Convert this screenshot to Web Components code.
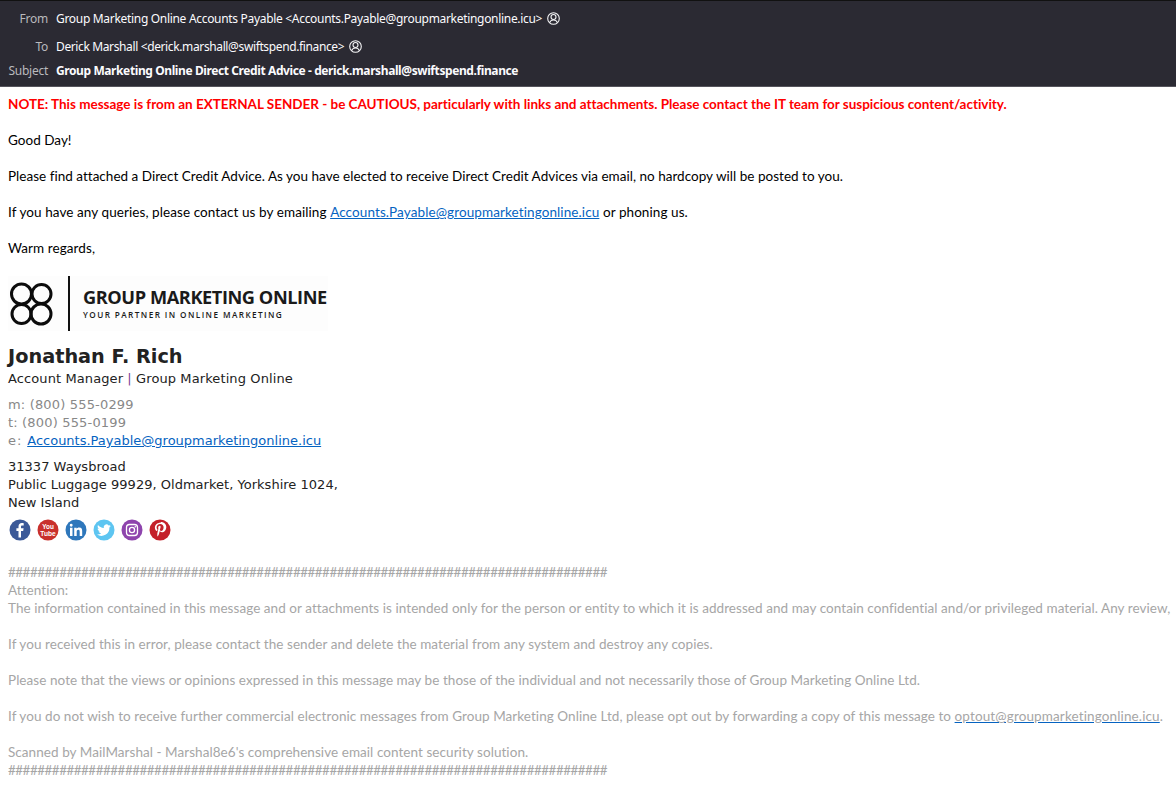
<!DOCTYPE html>
<html><head><meta charset="utf-8">
<style>html,body{margin:0;padding:0;background:#fff;overflow:hidden;width:1176px;height:796px}</style>
</head><body>
<mail-view>
<mail-header slot="header">
<header-row label="From" contact>Group Marketing Online Accounts Payable &lt;Accounts.Payable@groupmarketingonline.icu&gt;</header-row>
<header-row label="To" contact>Derick Marshall &lt;derick.marshall@swiftspend.finance&gt;</header-row>
<header-row label="Subject" strong>Group Marketing Online Direct Credit Advice - derick.marshall@swiftspend.finance</header-row>
</mail-header>
<mail-body>
<p class="note">NOTE: This message is from an EXTERNAL SENDER - be CAUTIOUS, particularly with links and attachments. Please contact the IT team for suspicious content/activity.</p>
<br>
<p class="tight">Good Day!</p><br>
<p class="tight">Please find attached a Direct Credit Advice. As you have elected to receive Direct Credit Advices via email, no hardcopy will be posted to you.</p><br>
<p class="wide">If you have any queries, please contact us by emailing <mail-link>Accounts.Payable@groupmarketingonline.icu</mail-link> or phoning us.</p><br>
<p class="wide">Warm regards,</p>
</mail-body>
<mail-signature></mail-signature>
<mail-footer></mail-footer>
</mail-view>
<script>
function def(name, html){
  customElements.define(name, class extends HTMLElement{
    constructor(){super();this.attachShadow({mode:'open'}).innerHTML=html;}
  });
}
const personIcon=`<svg width="13" height="13" viewBox="0 0 13 13" fill="none" stroke="#f4f4f6" stroke-width="1.1"><circle cx="6.5" cy="6.500" r="5.800"/><circle cx="6.500" cy="5" r="2.500"/><path d="M2.600 10.600C3.300 8.800 4.700 8 6.500 8s3.200.8 3.900 2.600"/></svg>`;
def('mail-view',`<style>:host{display:block;width:1176px;height:796px;overflow:hidden}</style><slot name="header"></slot><slot></slot>`);
def('mail-header',`<style>:host{display:block;box-sizing:border-box;height:87px;background:#2b2a33;border-top:1px solid #111;border-bottom:1px solid #55545c;padding-top:4px;font:12px "Noto Sans",sans-serif;color:#fbfbfe}</style><slot></slot>`);
customElements.define('header-row',class extends HTMLElement{
  constructor(){super();const r=this.attachShadow({mode:'open'});
    const l=this.getAttribute('label');
    r.innerHTML=`<style>
    :host{display:flex;align-items:center;height:${l==='From'?26:l==='To'?30:18}px}
    .l{width:48px;text-align:right;color:#b9b9bd;margin-right:8px;flex:none;letter-spacing:-.25px}
    .v{white-space:nowrap;letter-spacing:${l==='To'?-.375:-.31}px}
    :host([strong]) .v{font-weight:700;letter-spacing:-.4px}
    svg{margin-left:5px;flex:none}
    </style><span class="l">${l}</span><span class="v"><slot></slot></span>${this.hasAttribute('contact')?personIcon:''}`;
  }
});
def('mail-body',`<style>
:host{display:block;padding:8px 8px 0;font:13.500px/18px Lato,sans-serif;color:#000;letter-spacing:.06px}
::slotted(p){margin:0;white-space:nowrap}
::slotted(p.note){color:#f00;font-weight:700;letter-spacing:-.02px}
::slotted(p.tight){letter-spacing:.02px}
::slotted(p.wide){letter-spacing:.08px}
</style><slot></slot>`);
def('mail-link',`<style>a{color:#0563c1;letter-spacing:.1px}</style><a href="#"><slot></slot></a>`);
def('brand-logo',`<style>
:host{display:flex;align-items:center;width:320px;height:55px;background:#fdfdfd}
svg{flex:none}
.bar{width:2px;height:55px;background:#111;margin:0 13px 0 10px;flex:none}
.t{display:flex;flex-direction:column;gap:3px;color:#1a1a1a;white-space:nowrap}
b{font:700 18.200px/20px "Open Sans",sans-serif;letter-spacing:-.43px}
span{font:600 8.200px/10px "Open Sans",sans-serif;letter-spacing:1.420px}
</style>
<svg width="50" height="55" viewBox="0 0 50 55" fill="none" stroke="#0c0c0c" stroke-width="3">
<circle cx="13.500" cy="18" r="10"/><circle cx="33.500" cy="18" r="9.500"/><circle cx="13.500" cy="38" r="9.500"/><circle cx="33" cy="38" r="10"/></svg>
<i class="bar"></i><div class="t"><b>GROUP MARKETING ONLINE</b><span>YOUR PARTNER IN ONLINE MARKETING</span></div>`);
def('social-row',`<style>:host{display:flex;gap:6px}svg{width:22px;height:22px;display:block}</style>
<svg viewBox="0 0 22 22"><circle cx="11" cy="11" r="10.500" fill="#3b5998"/><path fill="#fff" d="M12 18.500v-6.600h2.200l.4-2.600H12V7.800c0-.8.3-1.300 1.300-1.300h1.400V4.200c-.3 0-1-.1-1.900-.1-2 0-3.300 1.200-3.300 3.400v1.800H7.400v2.600h2.100v6.600z"/></svg>
<svg viewBox="0 0 22 22"><circle cx="11" cy="11" r="10.500" fill="#c9302c"/><text x="11" y="10" text-anchor="middle" font-family="Liberation Sans" font-weight="700" font-size="6.400" fill="#fff">You</text><text x="11" y="17" text-anchor="middle" font-family="Liberation Sans" font-weight="700" font-size="6.600" fill="#fff">Tube</text></svg>
<svg viewBox="0 0 22 22"><circle cx="11" cy="11" r="10.500" fill="#2e77bb"/><path fill="#fff" d="M5 8.700h2.500V17H5zM6.200 4.800a1.400 1.400 0 1 1 0 2.900 1.400 1.400 0 0 1 0-2.900zM9.200 8.700h2.400v1.100c.4-.7 1.300-1.300 2.600-1.300 2.500 0 3 1.600 3 3.800V17h-2.500v-4.100c0-1 0-2.200-1.400-2.200s-1.600 1-1.600 2.100V17H9.200z"/></svg>
<svg viewBox="0 0 22 22"><circle cx="11" cy="11" r="10.500" fill="#5dc5f1"/><path fill="#fff" d="M17.800 6.800c-.5.2-1 .4-1.600.4.600-.3 1-.9 1.200-1.500-.5.300-1.100.6-1.800.7a2.800 2.800 0 0 0-4.800 2.600C8.400 8.900 6.400 7.700 5 6c-.7 1.300-.4 2.900.9 3.800-.5 0-.9-.1-1.300-.3 0 1.400 1 2.500 2.300 2.800-.4.100-.9.100-1.300 0 .4 1.100 1.400 1.900 2.600 2A5.700 5.700 0 0 1 4 15.500a8 8 0 0 0 12.400-7.100c.6-.4 1-.9 1.400-1.600z"/></svg>
<svg viewBox="0 0 22 22"><circle cx="11" cy="11" r="10.500" fill="#8e44ad"/><g fill="none" stroke="#fff" stroke-width="1.300"><rect x="5.500" y="5.500" width="11" height="11" rx="3"/><circle cx="11" cy="11" r="2.600"/></g><circle cx="14.300" cy="7.700" r=".8" fill="#fff"/></svg>
<svg viewBox="0 0 22 22"><circle cx="11" cy="11" r="10.500" fill="#c4202a"/><path fill="#fff" d="M11.500 3.800c-3.500 0-5.600 2.300-5.600 4.900 0 1.300.7 2.800 1.800 3.300.3.100.4 0 .5-.3l.2-.9c0-.2 0-.3-.1-.5-.4-.5-.7-1.100-.7-1.900 0-1.900 1.500-3.400 3.700-3.400 2 0 3.300 1.300 3.300 3.200 0 2.200-1.100 3.700-2.500 3.700-.8 0-1.400-.7-1.200-1.400.2-.9.7-1.900.7-2.600 0-.6-.3-1.100-1-1.100-.8 0-1.400.8-1.400 1.900 0 .7.200 1.100.2 1.100l-1 4.100c-.2.900-.1 2.300 0 3.100l.2.400.4-.3c.5-.8 1-1.900 1.200-2.800l.6-2.200c.3.600 1.100 1.100 2 1.100 2.600 0 4.500-2.400 4.500-5.300 0-2.800-2.300-5-5.400-5z"/></svg>`);
def('mail-signature',`<style>
:host{display:block;padding:19px 8px 0;font:13px/18px "DejaVu Sans",sans-serif;color:#222;white-space:nowrap}
.name{font-size:19.300px;font-weight:700;line-height:25px;margin-top:13px;color:#222}
.role{margin-top:1px;letter-spacing:.1px}
.role i{font-style:normal;color:#7b3f98}
.g{color:#888;margin-top:8px;letter-spacing:.17px}
.g span{letter-spacing:.9px}
a{color:#0563c1;letter-spacing:0}
.addr{margin-top:8px;color:#222;letter-spacing:.02px}
social-row{margin-top:7px;margin-left:1px}
</style>
<brand-logo></brand-logo>
<div class="name">Jonathan F. Rich</div>
<div class="role">Account Manager <i>|</i> Group Marketing Online</div>
<div class="g">m: (800) 555-0299<br>t: (800) 555-0199<br><span>e: </span><a href="#">Accounts.Payable@groupmarketingonline.icu</a></div>
<div class="addr">31337 Waysbroad<br>Public Luggage 99929, Oldmarket, Yorkshire 1024,<br>New Island</div>
<social-row></social-row>`);
def('mail-footer',`<style>
:host{display:block;padding:22px 8px 0;font:13.500px/18px Lato,sans-serif;color:#a6a6a6;white-space:nowrap;letter-spacing:.06px}
.h{letter-spacing:-.525px}
a{color:#a6a6a6;text-decoration-color:#0563c1;letter-spacing:.13px}
p{margin:0 0 18px}
</style>
<div class="h">${'#'.repeat(82)}</div>
<div>Attention:</div>
<p>The information contained in this message and or attachments is intended only for the person or entity to which it is addressed and may contain confidential and/or privileged material. Any review,</p>
<p>If you received this in error, please contact the sender and delete the material from any system and destroy any copies.</p>
<p>Please note that the views or opinions expressed in this message may be those of the individual and not necessarily those of Group Marketing Online Ltd.</p>
<p>If you do not wish to receive further commercial electronic messages from Group Marketing Online Ltd, please opt out by forwarding a copy of this message to <a href="#">optout@groupmarketingonline.icu</a>.</p>
<div>Scanned by MailMarshal - Marshal8e6's comprehensive email content security solution.</div>
<div class="h">${'#'.repeat(82)}</div>`);
</script>
</body></html>
